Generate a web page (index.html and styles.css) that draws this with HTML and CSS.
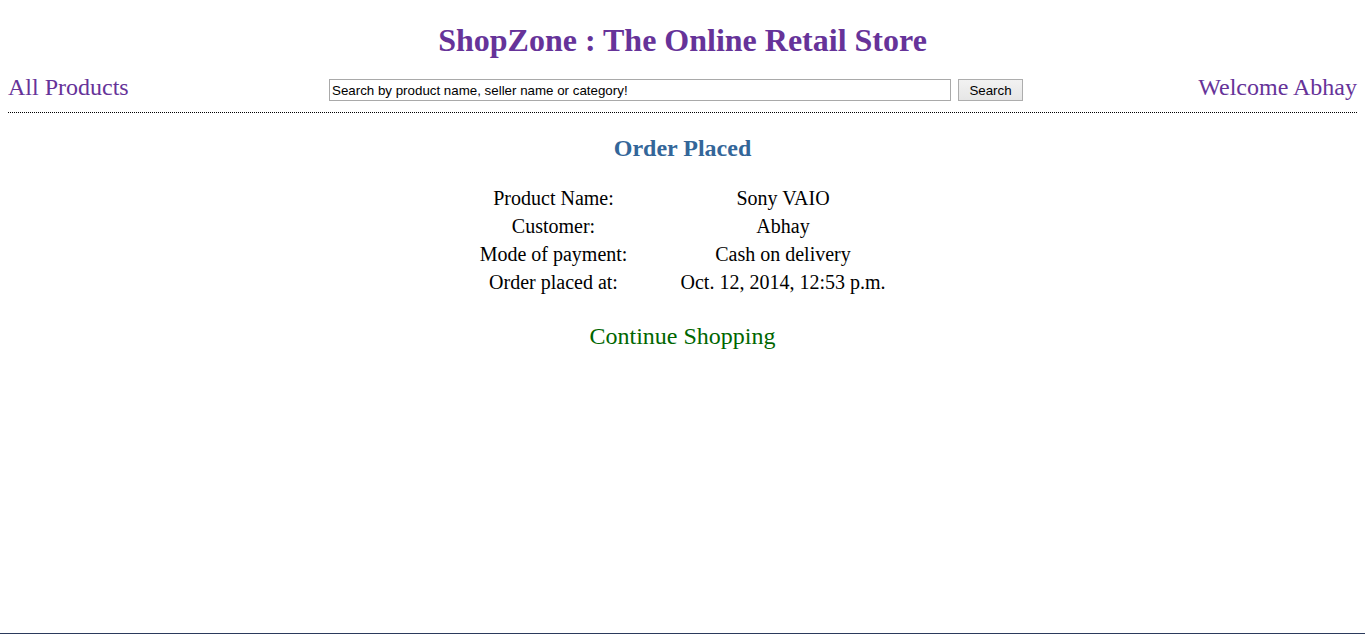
FILE: index.html
```html
<!DOCTYPE html>
<html>
<head>
<meta charset="utf-8">
<title>ShopZone</title>
<link rel="stylesheet" href="styles.css">
</head>
<body>
<h1 class="site-title">ShopZone : The Online Retail Store</h1>
<div class="nav">
  <a class="nav-link nav-left" href="#">All Products</a>
  <form class="search">
    <input class="search-input" type="text" value="Search by product name, seller name or category!">
    <button class="search-btn" type="button">Search</button>
  </form>
  <a class="nav-link nav-right" href="#">Welcome Abhay</a>
</div>
<hr class="divider">
<h2 class="order-title">Order Placed</h2>
<div class="details">
  <div class="label">Product Name:</div><div class="value">Sony VAIO</div>
  <div class="label">Customer:</div><div class="value">Abhay</div>
  <div class="label">Mode of payment:</div><div class="value">Cash on delivery</div>
  <div class="label">Order placed at:</div><div class="value">Oct. 12, 2014, 12:53 p.m.</div>
</div>
<div class="continue"><a href="#" class="continue-link">Continue Shopping</a></div>
</body>
</html>
```
FILE: styles.css
```css
html, body {
  margin: 0;
  padding: 0;
  background: #fff;
}
body {
  padding: 0 8px;
  font-family: "Liberation Serif", "Times New Roman", serif;
  color: #000;
  height: 634px;
  box-sizing: border-box;
  border-bottom: 1px solid #2b3a5c;
}
.site-title {
  margin: 0;
  padding-top: 23px;
  text-align: center;
  font-size: 32px;
  line-height: 34px;
  font-weight: bold;
  color: #663399;
}
.nav {
  display: grid;
  grid-template-columns: 1fr auto 1fr;
  align-items: center;
  margin-top: 17px;
  height: 30px;
}
.nav-link {
  color: #663399;
  text-decoration: none;
  font-size: 24px;
  line-height: 30px;
}
.nav-left { justify-self: start; margin-top: -4px; }
.nav-right { justify-self: end; margin-top: -4px; }
.search {
  display: flex;
  gap: 7px;
  margin: 0 13px 0 0;
  padding-top: 2px;
}
.search-input {
  box-sizing: border-box;
  width: 622px;
  height: 22px;
  border: 1px solid #a9a9a9;
  padding: 0 2px;
  font-family: "Liberation Sans", Arial, sans-serif;
  font-size: 13.33px;
  color: #000;
  margin: 0;
}
.search-btn {
  box-sizing: border-box;
  width: 65px;
  height: 22px;
  border: 1px solid #adadad;
  background: linear-gradient(#f2f2f2, #e6e6e6);
  font-family: "Liberation Sans", Arial, sans-serif;
  font-size: 13.33px;
  color: #000;
  padding: 0;
  margin: 0;
}
.divider {
  border: 0;
  border-top: 1px dotted #000;
  margin: 8px 0 0 0;
  height: 0;
}
.order-title {
  margin: 21px 0 0 0;
  text-align: center;
  font-size: 24px;
  line-height: 28px;
  font-weight: bold;
  color: #336699;
}
.details {
  display: grid;
  grid-template-columns: 148px 205px;
  column-gap: 53px;
  justify-content: center;
  margin-top: 22px;
  font-size: 20px;
  line-height: 28px;
  text-align: center;
}
.continue {
  text-align: center;
  margin-top: 26px;
}
.continue-link {
  color: #006600;
  text-decoration: none;
  font-size: 24px;
  line-height: 28px;
}
```
